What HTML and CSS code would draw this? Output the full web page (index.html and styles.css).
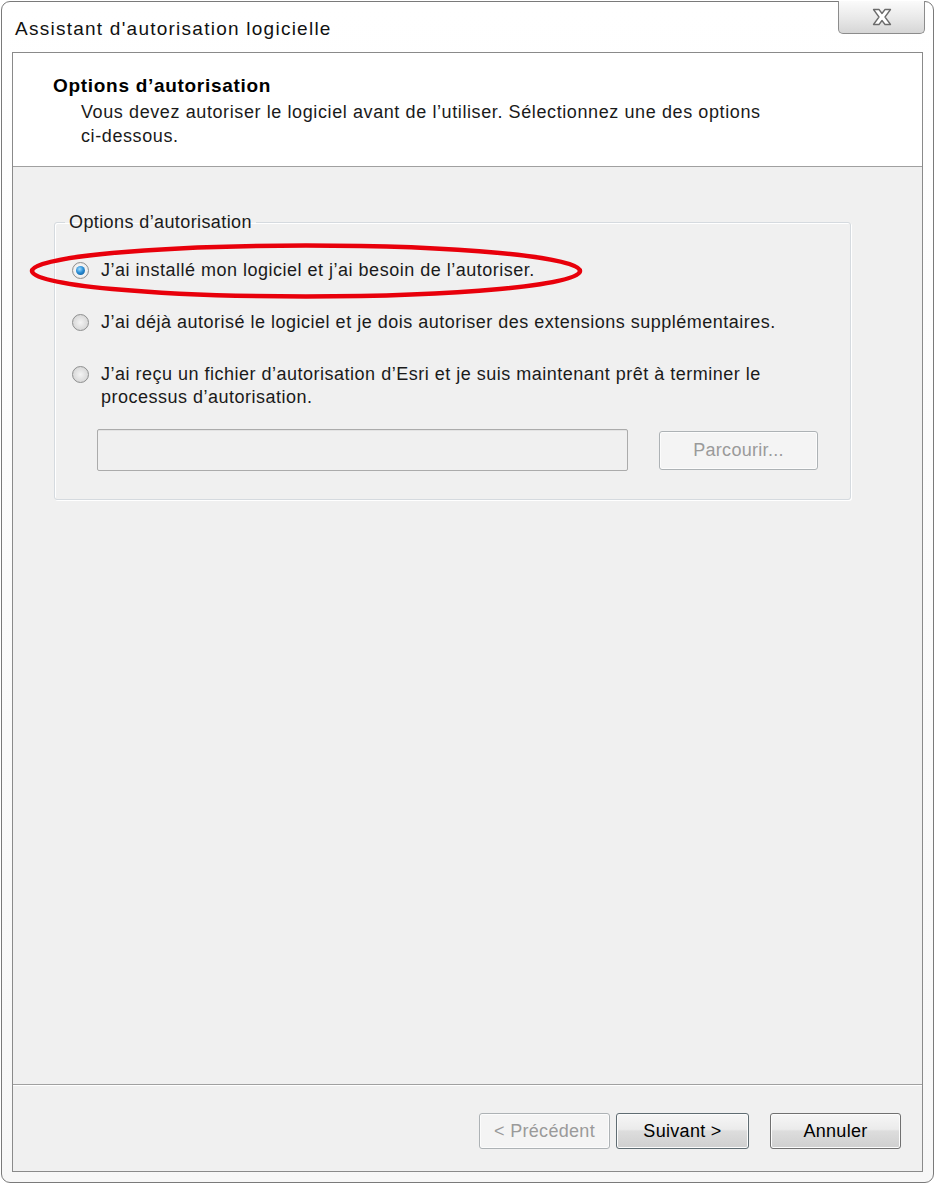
FILE: index.html
```html
<!DOCTYPE html>
<html lang="fr">
<head>
<meta charset="utf-8">
<title>Assistant d'autorisation logicielle</title>
<link rel="stylesheet" href="styles.css">
</head>
<body>
<div class="window">
  <div class="titlebar">
    <div class="title">Assistant d'autorisation logicielle</div>
    <div class="close">
      <svg width="22" height="18" viewBox="0 0 22 18">
        <path d="M2.5 1.5 H8 L11 5.5 L14 1.5 H19.5 L14 9 L19.5 16.5 H14 L11 12.5 L8 16.5 H2.5 L8 9 Z" fill="#fff" stroke="#6b6b6b" stroke-width="1.3" stroke-linejoin="round"/>
      </svg>
    </div>
  </div>
  <div class="client">
    <div class="header">
      <div class="h-title">Options d’autorisation</div>
      <div class="h-sub">Vous devez autoriser le logiciel avant de l’utiliser. Sélectionnez une des options<br>ci-dessous.</div>
    </div>
    <div class="body">
      <fieldset class="group">
        <legend class="legend">Options d’autorisation</legend>
        <div class="option first">
          <span class="radio checked"><span class="dot"></span></span>
          <span class="label">J’ai installé mon logiciel et j’ai besoin de l’autoriser.</span>
        </div>
        <div class="option">
          <span class="radio"></span>
          <span class="label">J’ai déjà autorisé le logiciel et je dois autoriser des extensions supplémentaires.</span>
        </div>
        <div class="option">
          <span class="radio"></span>
          <span class="label">J’ai reçu un fichier d’autorisation d’Esri et je suis maintenant prêt à terminer le<br>processus d’autorisation.</span>
        </div>
        <div class="file-row">
          <div class="field"></div>
          <div class="btn disabled browse">Parcourir...</div>
        </div>
      </fieldset>
    </div>
    <div class="footer">
      <div class="btn disabled">&lt; Précédent</div>
      <div class="btn default">Suivant &gt;</div>
      <div class="btn cancel">Annuler</div>
    </div>
  </div>
  <svg class="highlight" width="560" height="62" viewBox="0 0 560 62">
    <ellipse cx="279" cy="31" rx="274" ry="25.5" fill="none" stroke="#e8000b" stroke-width="4.5"/>
  </svg>
</div>
</body>
</html>
```

FILE: styles.css
```css
html, body {
  margin: 0;
  padding: 0;
  background: #ffffff;
}

body {
  font-family: "Liberation Sans", Arial, sans-serif;
  color: #1a1a1a;
}

.window {
  position: relative;
  box-sizing: border-box;
  width: 933px;
  height: 1182px;
  margin: 1px 0 0 1px;
  border: 1.5px solid #7a7a7a;
  border-radius: 9px;
  background: linear-gradient(#ffffff, #f7f7f7);
  display: flex;
  flex-direction: column;
}

.titlebar {
  height: 50px;
  display: flex;
  justify-content: space-between;
  align-items: flex-start;
}

.title {
  font-size: 19px;
  letter-spacing: 1.25px;
  padding: 16px 0 0 13px;
  color: #111;
}

.close {
  width: 87px;
  height: 33px;
  margin-right: 8px;
  margin-top: -1px;
  box-sizing: border-box;
  border: 1px solid #8c8c8c;
  border-top: none;
  border-radius: 0 0 5px 5px;
  background: linear-gradient(#fbfbfb, #e8e8e8 55%, #d6d6d6);
  display: flex;
  align-items: center;
  justify-content: center;
}

.client {
  margin: 0 10px 10px 10px;
  border: 1px solid #8a8a8a;
  flex: 1;
  display: flex;
  flex-direction: column;
  background: #f0f0f0;
}

.header {
  height: 114px;
  background: #ffffff;
  border-bottom: 1px solid #a0a0a0;
  box-sizing: border-box;
  padding: 22px 0 0 40px;
}

.h-title {
  font-weight: bold;
  font-size: 19px;
  letter-spacing: 0.7px;
  color: #000;
}

.h-sub {
  font-size: 18px;
  letter-spacing: 0.6px;
  line-height: 24px;
  margin: 3px 0 0 28px;
  color: #1a1a1a;
}

.body {
  flex: 1;
  padding: 45px 0 0 41px;
  border-bottom: 1px solid #a0a0a0;
  box-shadow: 0 1px 0 #ffffff;
}

.group {
  box-sizing: border-box;
  width: 797px;
  height: 288px;
  margin: 0;
  padding: 0;
  border: 1px solid #d5dadf;
  border-radius: 3px;
  box-shadow: inset 1px 1px 0 #ffffff, 1px 1px 0 #ffffff;
}

.legend {
  font-size: 18px;
  letter-spacing: 0.4px;
  padding: 0 4px;
  margin-left: 10px;
  color: #1a1a1a;
}

.option {
  display: flex;
  align-items: flex-start;
  padding-left: 17px;
  margin-top: 29px;
  font-size: 18px;
  letter-spacing: 0.5px;
  line-height: 23px;
}

.option.first {
  margin-top: 26px;
}

.radio {
  box-sizing: border-box;
  width: 17px;
  height: 17px;
  margin-top: 3px;
  border-radius: 50%;
  border: 1px solid #8e8f8f;
  background: radial-gradient(circle at 50% 50%, #f4f4f4 0, #e2e2e2 45%, #cfcfcf 100%);
  display: flex;
  align-items: center;
  justify-content: center;
  flex: none;
}

.radio.checked {
  background: radial-gradient(circle at 50% 50%, #ffffff 0, #f0f0f0 60%, #d8d8d8 100%);
}

.dot {
  width: 9px;
  height: 9px;
  border-radius: 50%;
  background: radial-gradient(circle at 40% 35%, #9fdcff 0, #2c8fd6 45%, #0b4f8a 100%);
}

.label {
  margin-left: 12px;
}

.file-row {
  display: flex;
  align-items: center;
  margin: 20px 0 0 42px;
}

.field {
  box-sizing: border-box;
  width: 531px;
  height: 42px;
  border: 1px solid #ababab;
  border-radius: 2px;
  background: #f0f0f0;
  box-shadow: inset 0 1px 0 #e3e3e3;
}

.btn {
  box-sizing: border-box;
  width: 131px;
  height: 36px;
  border: 1px solid #707070;
  border-radius: 3px;
  background: linear-gradient(#f6f6f6 0, #ebebeb 45%, #dddddd 50%, #cfcfcf 100%);
  font-size: 18px;
  letter-spacing: 0.3px;
  color: #000;
  display: flex;
  align-items: center;
  justify-content: center;
  box-shadow: inset 0 0 0 1px #fcfcfc;
}

.btn.disabled {
  background: #f4f4f4;
  border-color: #adb2b5;
  color: #9a9a9a;
}

.btn.browse {
  width: 159px;
  height: 39px;
  margin-left: 31px;
}

.btn.default {
  border-color: #5f6c72;
  margin-left: 6px;
  width: 133px;
}

.btn.cancel {
  margin-left: 21px;
}

.footer {
  height: 86px;
  box-sizing: border-box;
  display: flex;
  justify-content: flex-end;
  align-items: flex-start;
  padding: 28px 21px 0 0;
}

.highlight {
  position: absolute;
  left: 25px;
  top: 238px;
}
```
